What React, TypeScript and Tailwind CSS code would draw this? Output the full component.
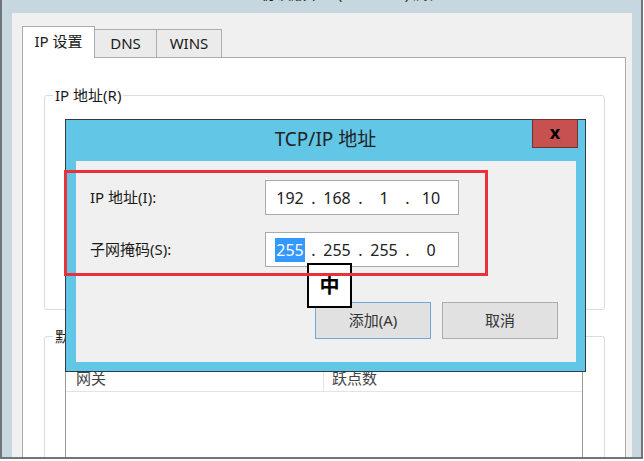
import React from "react";

function IpField({ parts, selectFirst }: { parts: string[]; selectFirst?: boolean }) {
  return (
    <div className="w-[194px] h-[35px] bg-white border border-[#a9a9a9] flex items-center pl-[9px] text-[16px] text-[#222]">
      {parts.map((p, i) => (
        <React.Fragment key={i}>
          <div className="w-[30px] flex justify-center">
            {i === 0 && selectFirst ? (
              <span className="bg-[#3399ff] text-white px-[1px] leading-[24px]">{p}</span>
            ) : (
              <span className="leading-[24px]">{p}</span>
            )}
          </div>
          {i < parts.length - 1 && <div className="w-[17px] flex justify-center leading-[24px]">.</div>}
        </React.Fragment>
      ))}
    </div>
  );
}

export default function App() {
  return (
    <div className="relative w-[644px] h-[461px] overflow-hidden bg-white font-['Noto_Sans','Noto_Sans_CJK_SC',sans-serif] text-[#1a1a1a]">
      {/* background window */}
      <div className="w-[643px] h-[459px] flex flex-col bg-[#c6d7df] border-x-2 border-b-2 border-[#6f767b]">
        <div className="h-[13px] overflow-hidden flex justify-center">
          <div className="-mt-[15px] text-[15px] leading-[17px] text-[#222] whitespace-nowrap">Internet 协议版本 4 (TCP/IPv4) 属性</div>
        </div>
        <div className="flex-1 ml-[10px] mr-[9px] bg-[#f0f0f0] flex flex-col pl-[10px] pr-[6px] pt-[13px]">
          {/* tabs */}
          <div className="flex items-end h-[32px] relative z-10 -mb-[1px]">
            <div className="h-[32px] w-[73px] bg-white border border-b-0 border-[#acacac] flex items-center justify-center text-[15px] pb-[2px]">IP 设置</div>
            <div className="h-[29px] w-[62px] bg-[#ebebeb] border border-l-0 border-b border-[#acacac] flex items-center justify-center text-[15px]">DNS</div>
            <div className="h-[29px] w-[65px] bg-[#ebebeb] border border-l-0 border-b border-[#acacac] flex items-center justify-center text-[15px]">WINS</div>
          </div>
          {/* panel */}
          <div className="flex-1 bg-white border border-b-0 border-[#acacac] flex flex-col pl-[21px] pr-[20px] pt-[37px]">
            <div className="relative h-[215px] border border-[#dcdcdc] rounded-[3px]">
              <div className="absolute -top-[11px] left-[8px] bg-white px-[2px] text-[15px] leading-[20px]">IP 地址(R)</div>
            </div>
            <div className="relative mt-[26px] flex-1 border border-b-0 border-[#dcdcdc] rounded-t-[3px] flex flex-col pl-[20px] pr-[21px] pt-[27px]">
              <div className="absolute -top-[11px] left-[8px] bg-white px-[2px] text-[15px] leading-[20px]">默认网关(F):</div>
              <div className="flex-1 border border-b-0 border-[#9a9a9a] flex flex-col">
                <div className="h-[27px] flex border-b border-[#e3e3e3] text-[15px] text-[#444]">
                  <div className="w-[258px] border-r border-[#e3e3e3] pl-[10px] flex items-center">网关</div>
                  <div className="pl-[8px] flex items-center">跃点数</div>
                </div>
              </div>
            </div>
          </div>
        </div>
      </div>

      {/* TCP/IP dialog */}
      <div className="absolute left-[65px] top-[119px] w-[521px] h-[253px] bg-[#62c6e7] border border-[#2f3c44] flex flex-col">
        <div className="h-[41px] flex items-center justify-center text-[19px] text-[#222] pb-[3px]">TCP/IP 地址</div>
        <div className="absolute -top-[1px] right-[7px] w-[46px] h-[29px] bg-[#c75050] border border-[#6e3434] flex items-center justify-center text-[18px] font-bold text-black leading-none pb-[3px]">x</div>
        <div className="flex-1 ml-[10px] mr-[9px] mb-[9px] bg-[#f0f0f0] flex flex-col pt-[19px]">
          <div className="flex items-center h-[35px]">
            <div className="w-[189px] pl-[14px] text-[15px]">IP 地址(I):</div>
            <IpField parts={["192", "168", "1", "10"]} />
          </div>
          <div className="flex items-center h-[35px] mt-[17px]">
            <div className="w-[189px] pl-[14px] text-[15px]">子网掩码(S):</div>
            <IpField parts={["255", "255", "255", "0"]} selectFirst />
          </div>
          <div className="flex justify-end gap-[11px] pr-[18px] mt-[35px]">
            <div className="w-[116px] h-[37px] bg-[#e1e1e1] border border-[#6fa6dc] flex items-center justify-center text-[15px] text-[#333]">添加(A)</div>
            <div className="w-[116px] h-[37px] bg-[#e1e1e1] border border-[#adadad] flex items-center justify-center text-[15px] text-[#333]">取消</div>
          </div>
        </div>
      </div>

      {/* IME indicator */}
      <div className="absolute left-[307px] top-[263px] w-[45px] h-[45px] bg-white border-2 border-black flex items-center justify-center text-[20px] font-bold text-black">中</div>

      {/* red annotation box */}
      <div className="absolute left-[64px] top-[170px] w-[424px] h-[106px] border-[3px] border-[#e8313a]"></div>
    </div>
  );
}
